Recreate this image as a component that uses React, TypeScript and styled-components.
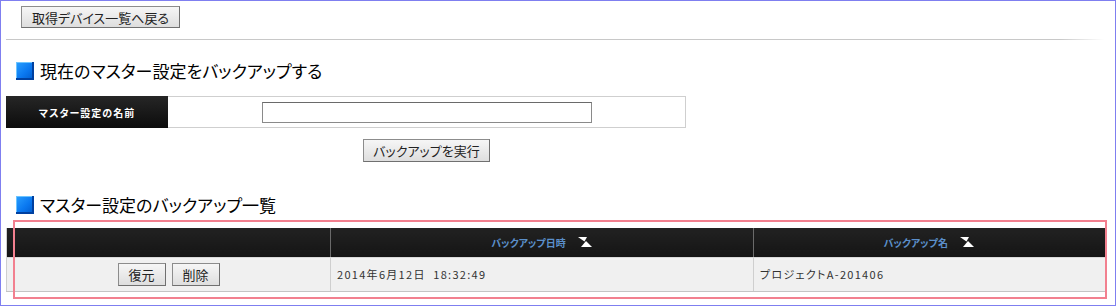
import React from "react";
import styled, { createGlobalStyle } from "styled-components";

const GlobalStyle = createGlobalStyle`
  html, body { margin: 0; padding: 0; background: #fff; }
  body {
    font-family: "Noto Sans CJK JP", "Liberation Sans", sans-serif;
    font-feature-settings: "palt";
    color: #222;
  }
  * { box-sizing: border-box; }
`;

const Frame = styled.div`
  position: relative;
  width: 1116px;
  height: 306px;
  border: 1px solid #7f7ff0;
  padding: 5px 11px 0 5px;
  background: #fff;
  overflow: hidden;
`;

const Button = styled.button<{ $w?: number }>`
  height: ${(p) => (p.$w ? 23 : 22)}px;
  ${(p) => (p.$w ? `width: ${p.$w}px;` : "")}
  padding: 0 ${(p) => (p.$w ? 0 : 10)}px;
  white-space: nowrap;
  font-family: inherit;
  font-feature-settings: "palt";
  font-size: 13px;
  line-height: 1;
  color: #222;
  background: linear-gradient(#f6f6f6, #dedede);
  border: 1px solid #8c8c8c;
  border-right-color: #707070;
  border-bottom-color: #707070;
  border-radius: 0;
  cursor: pointer;
`;

const BackRow = styled.div`
  display: flex;
  padding-left: 15px;
`;

const Divider = styled.div`
  margin-top: 11px;
  height: 1px;
  background: linear-gradient(to right, #c8c8c8 96%, rgba(200, 200, 200, 0));
`;

const Heading = styled.h2<{ $top: number }>`
  display: flex;
  align-items: center;
  gap: 6px;
  margin: ${(p) => p.$top}px 0 0 0;
  padding-left: 10px;
  height: 24px;
  font-size: 17px;
  font-weight: normal;
  line-height: 24px;
  color: #000;
  letter-spacing: 0;
`;

const Square = styled.span`
  display: inline-block;
  width: 18px;
  height: 18px;
  background: linear-gradient(135deg, #2aa0ff 0%, #0a78f0 55%, #0058c8 100%);
  box-shadow: inset -2px -2px 0 #0040a0, inset 1px 1px 0 #6cc4ff;
`;

const FormTable = styled.div`
  display: grid;
  grid-template-columns: 161px 1fr;
  width: 680px;
  height: 32px;
  margin-top: 13px;
  border: 1px solid #cfcfcf;
`;

const LabelCell = styled.div`
  display: flex;
  align-items: center;
  justify-content: center;
  margin: -1px 0 -1px -1px;
  background: linear-gradient(#262626, #0c0c0c);
  color: #fff;
  font-size: 10px;
  font-weight: bold;
  letter-spacing: 1px;
`;

const InputCell = styled.div`
  display: flex;
  align-items: center;
  justify-content: center;
  background: #fff;
`;

const TextInput = styled.input`
  width: 330px;
  height: 21px;
  border: 1px solid #8a8a8a;
  border-top-color: #6a6a6a;
  background: #fff;
  padding: 0 4px;
  font-family: inherit;
`;

const ActionRow = styled.div`
  display: grid;
  grid-template-columns: 161px 1fr;
  width: 680px;
  margin-top: 11px;
`;

const ActionCell = styled.div`
  grid-column: 2;
  display: flex;
  justify-content: center;
`;

const Table = styled.table`
  margin-top: 11px;
  width: 1098px;
  border-collapse: collapse;
  table-layout: fixed;
`;

const Th = styled.th<{ $w: number }>`
  width: ${(p) => p.$w}px;
  height: 29px;
  padding: 0;
  background: linear-gradient(#222, #141414);
  border-left: 1px solid #6a6a6a;
  border-bottom: 1px solid #d8d8d8;
  color: #5b8fca;
  font-size: 10px;
  font-weight: bold;
  letter-spacing: 0;
  &:first-child { border-left: 1px solid #cfcfcf; }
`;

const ThInner = styled.span`
  display: inline-flex;
  align-items: center;
  gap: 12px;
`;

const Td = styled.td<{ $center?: boolean }>`
  height: 34px;
  padding: 0 0 0 ${(p) => (p.$center ? 0 : 6)}px;
  background: #f0f0f0;
  border-left: 1px solid #cfcfcf;
  border-bottom: 1px solid #c4c4c4;
  font-size: 11px;
  letter-spacing: 1.3px;
  color: #333;
  text-align: ${(p) => (p.$center ? "center" : "left")};
  white-space: pre;
`;

const RowButtons = styled.div`
  display: flex;
  justify-content: center;
  gap: 6px;
  padding-top: 1px;
`;

const SmallButton = styled(Button)`
  height: 23px;
  width: 48px;
  padding: 0;
`;

const Highlight = styled.div`
  position: absolute;
  left: 12px;
  top: 219px;
  width: 1094px;
  height: 79px;
  border: 2px solid #f2808f;
  pointer-events: none;
`;

const SortIcon = () => (
  <svg width="15" height="10" viewBox="0 0 15 10">
    <polygon points="0,0 9,0 6.5,4.5" fill="#fff" />
    <polygon points="8,4 14,10 3,10" fill="#fff" />
  </svg>
);

export default function App() {
  return (
    <>
      <GlobalStyle />
      <Frame>
        <BackRow>
          <Button>取得デバイス一覧へ戻る</Button>
        </BackRow>
        <Divider />
        <Heading $top={19}>
          <Square />
          現在のマスター設定をバックアップする
        </Heading>
        <FormTable>
          <LabelCell>マスター設定の名前</LabelCell>
          <InputCell>
            <TextInput type="text" />
          </InputCell>
        </FormTable>
        <ActionRow>
          <ActionCell>
            <Button $w={127}>バックアップを実行</Button>
          </ActionCell>
        </ActionRow>
        <Heading $top={31}>
          <Square />
          マスター設定のバックアップ一覧
        </Heading>
        <Table>
          <thead>
            <tr>
              <Th $w={324}></Th>
              <Th $w={423}>
                <ThInner>
                  バックアップ日時
                  <SortIcon />
                </ThInner>
              </Th>
              <Th $w={351}>
                <ThInner>
                  バックアップ名
                  <SortIcon />
                </ThInner>
              </Th>
            </tr>
          </thead>
          <tbody>
            <tr>
              <Td $center>
                <RowButtons>
                  <SmallButton>復元</SmallButton>
                  <SmallButton>削除</SmallButton>
                </RowButtons>
              </Td>
              <Td>{"2014年6月12日  18:32:49"}</Td>
              <Td>プロジェクトA-201406</Td>
            </tr>
          </tbody>
        </Table>
        <Highlight />
      </Frame>
    </>
  );
}
